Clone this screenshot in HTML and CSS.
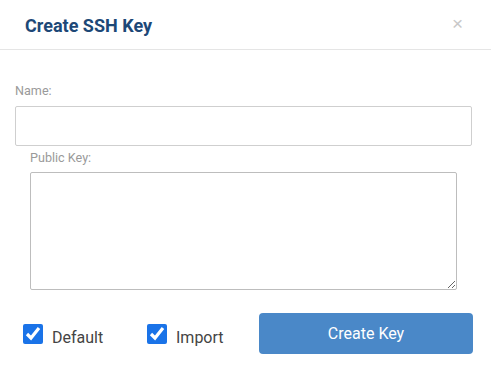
FILE: index.html
```html
<!DOCTYPE html>
<html lang="en">
<head>
    <meta charset="UTF-8">
    <meta name="viewport" content="width=device-width, initial-scale=1.0">
    <title>Create SSH Key</title>
    <link rel="stylesheet" href="styles.css">
</head>
<body>

<div class="modal">
    <div class="modal-header">
        <h2>Create SSH Key</h2>
        <button type="button" class="close">&times;</button>
    </div>

    <div class="modal-body">
        <div class="form-group">
            <label for="keyName">Name:</label>
            <input type="text" id="keyName">
        </div>

        <div class="form-group indent">
            <label for="publicKey">Public Key:</label>
            <textarea id="publicKey"></textarea>
        </div>

        <div class="footer">
            <label class="check first">
                <input type="checkbox" checked>
                <span>Default</span>
            </label>
            <label class="check">
                <input type="checkbox" checked>
                <span>Import</span>
            </label>
            <button type="button" class="btn">Create Key</button>
        </div>
    </div>
</div>

</body>
</html>
```

FILE: styles.css
```css
body {
    font-family: Roboto, "Liberation Sans", sans-serif;
    background-color: #fff;
    margin: 0;
    padding: 0;
}

.modal {
    width: 491px;
    height: 375px;
    background-color: white;
}

.modal-header {
    height: 49px;
    border-bottom: 1px solid #e5e5e5;
    display: flex;
    align-items: center;
    justify-content: space-between;
    padding: 0 28px 0 25px;
}

.modal-header h2 {
    margin: 0;
    font-size: 18px;
    font-weight: bold;
    color: #1d4877;
    position: relative;
    top: 1px;
}

.close {
    background: none;
    border: none;
    padding: 0;
    font-size: 19px;
    line-height: 1;
    color: #c8c8c8;
    cursor: pointer;
    margin-top: -2px;
}

.modal-body {
    padding: 34px 19px 0 15px;
}

.form-group label {
    display: block;
    font-size: 12.6px;
    line-height: 14px;
    color: #9a9a9a;
    margin-bottom: 8px;
}

.form-group input {
    display: block;
    box-sizing: border-box;
    width: 100%;
    height: 40px;
    border: 1px solid #cfcfcf;
    border-radius: 2px;
    margin: 0;
}

.indent {
    padding: 0 15px;
    margin-top: 5px;
}

.indent label {
    margin-bottom: 7px;
}

.form-group textarea {
    display: block;
    box-sizing: border-box;
    width: 100%;
    height: 118px;
    border: 1px solid #bdbdbd;
    border-radius: 2px;
    margin: 0;
    resize: both;
}

.footer {
    display: flex;
    align-items: center;
    margin-top: 23px;
    margin-right: -1px;
}

.check {
    display: flex;
    align-items: center;
    font-size: 16px;
    color: #444;
}

.check.first {
    margin-left: 8px;
    width: 124px;
}

.check input {
    width: 20px;
    height: 20px;
    margin: 0 9px 0 0;
    accent-color: #1a73e8;
}

.check span {
    margin-top: 8px;
}

.btn {
    margin-left: auto;
    flex-shrink: 0;
    width: 214px;
    height: 41px;
    background-color: #4a88c8;
    color: white;
    border: none;
    border-radius: 4px;
    font-family: Roboto, "Liberation Sans", sans-serif;
    font-size: 16px;
    cursor: pointer;
}
```
